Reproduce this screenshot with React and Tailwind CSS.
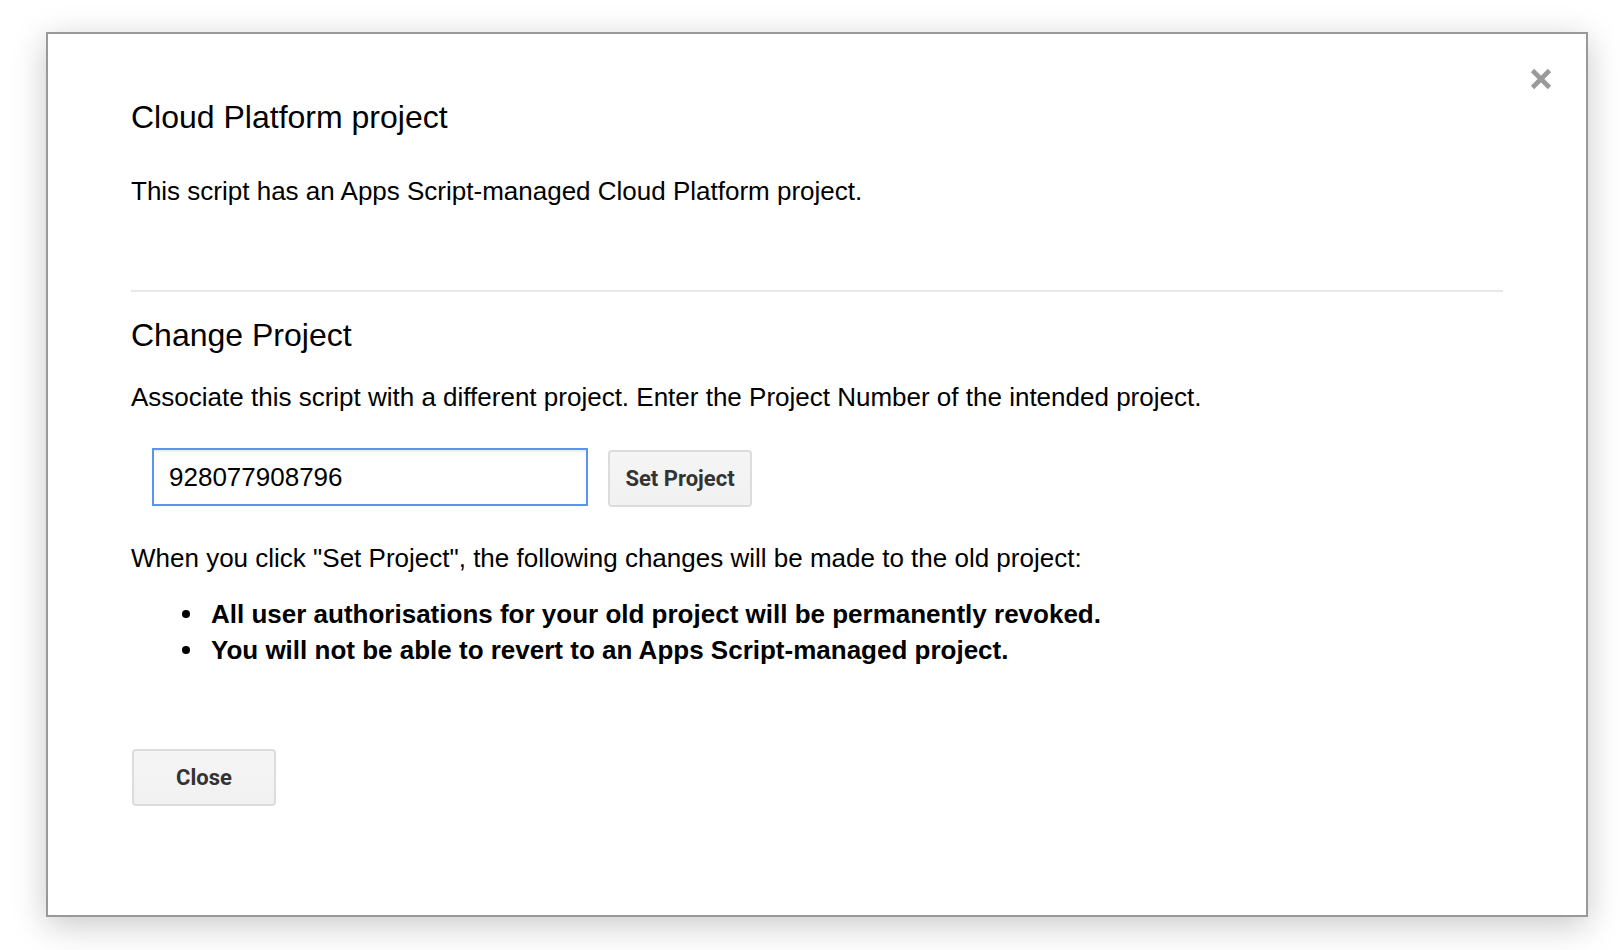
export default function App() {
  return (
    <div className="w-[1620px] h-[950px] bg-white overflow-hidden" style={{ fontFamily: '"Liberation Sans", Arial, sans-serif' }}>
      <div className="relative ml-[46px] mt-[32px] w-[1542px] h-[885px] bg-white border-2 border-[#999999] shadow-[0_8px_32px_rgba(0,0,0,0.22)] px-[83px] pt-[63px] text-black">
        <button className="absolute top-[34px] right-[34px] w-[22px] h-[22px]" aria-label="Close">
          <svg width="22" height="22" viewBox="0 0 22 22">
            <path d="M2.5 2.5 L19.5 19.5 M19.5 2.5 L2.5 19.5" stroke="#9a9a9a" strokeWidth="4.6" strokeLinecap="butt" fill="none" />
          </svg>
        </button>

        <h2 className="text-[32px] leading-[40px] font-normal">Cloud Platform project</h2>
        <p className="mt-[38px] text-[26px] leading-[32px]">This script has an Apps Script-managed Cloud Platform project.</p>

        <div className="mt-[83px] h-[2px] bg-[#e8e8e8]" />

        <h2 className="mt-[23px] text-[32px] leading-[40px] font-normal">Change Project</h2>
        <p className="mt-[26px] text-[26px] leading-[32px]">Associate this script with a different project. Enter the Project Number of the intended project.</p>

        <div className="mt-[35px] flex items-start ml-[21px]">
          <input
            readOnly
            value="928077908796"
            className="w-[436px] h-[58px] border-2 border-[#5b93f0] pl-[15px] text-[26px] text-black outline-none shadow-[inset_0_2px_2px_rgba(0,0,0,0.08)]"
            style={{ fontFamily: '"Liberation Sans", Arial, sans-serif' }}
          />
          <button
            className="ml-[20px] mt-[2px] w-[144px] h-[57px] rounded-[4px] border-2 border-[#dcdcdc] bg-gradient-to-b from-[#f5f5f5] to-[#f1f1f1] text-[22px] font-bold text-[#333333]"
            style={{ fontFamily: 'Roboto, "Liberation Sans", sans-serif' }}
          >
            Set Project
          </button>
        </div>

        <p className="mt-[35px] text-[26px] leading-[32px]">When you click "Set Project", the following changes will be made to the old project:</p>

        <ul className="mt-[22px] text-[26px] leading-[36px] font-bold">
          <li className="flex items-center">
            <span className="ml-[51px] mr-[21px] w-[8px] h-[8px] rounded-full bg-black shrink-0" />
            <span>All user authorisations for your old project will be permanently revoked.</span>
          </li>
          <li className="flex items-center">
            <span className="ml-[51px] mr-[21px] w-[8px] h-[8px] rounded-full bg-black shrink-0" />
            <span>You will not be able to revert to an Apps Script-managed project.</span>
          </li>
        </ul>

        <button
          className="mt-[81px] ml-[1px] w-[144px] h-[57px] rounded-[4px] border-2 border-[#dcdcdc] bg-gradient-to-b from-[#f5f5f5] to-[#f1f1f1] text-[22px] font-bold text-[#333333]"
          style={{ fontFamily: 'Roboto, "Liberation Sans", sans-serif' }}
        >
          Close
        </button>
      </div>
    </div>
  );
}
